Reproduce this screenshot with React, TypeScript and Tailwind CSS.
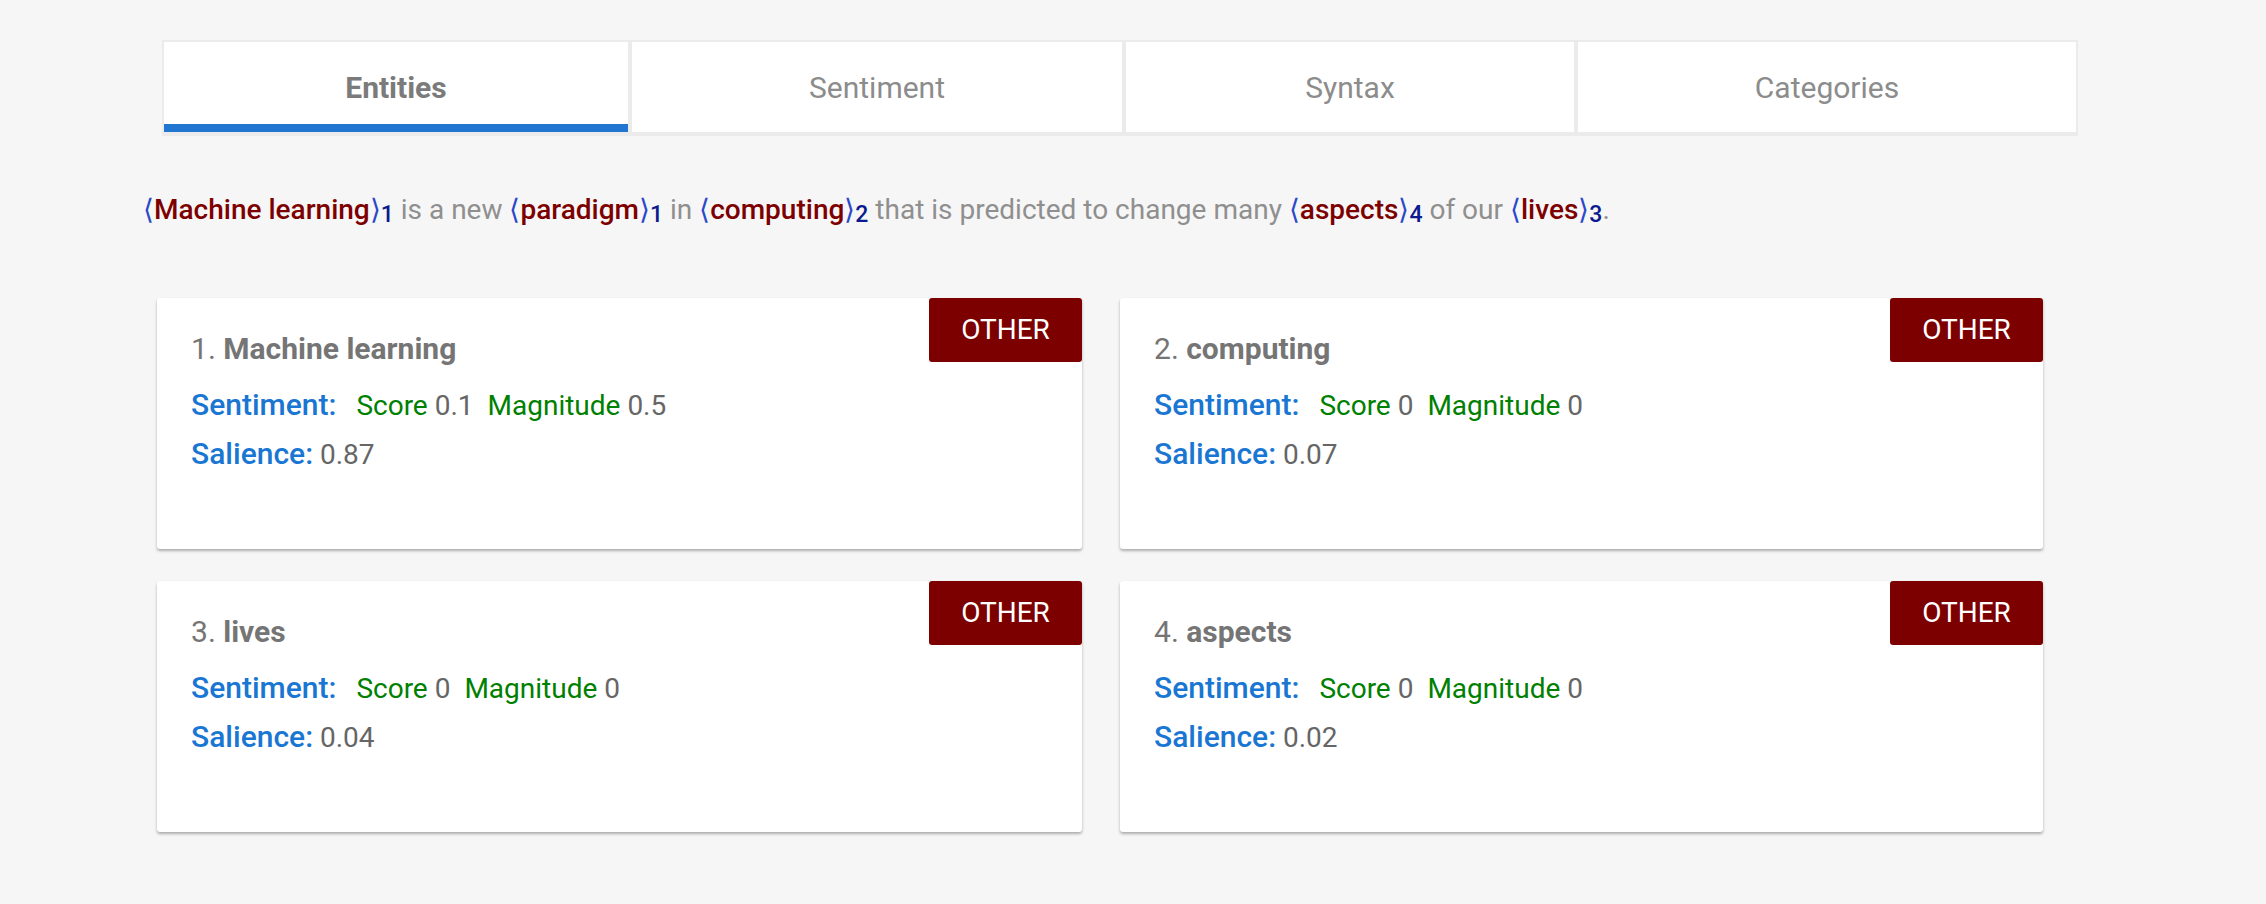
import React from "react";

interface Entity {
  idx: number;
  name: string;
  score: string;
  magnitude: string;
  salience: string;
}

const tabs = [
  { label: "Entities", w: "w-[468px]", active: true },
  { label: "Sentiment", w: "w-[494px]", active: false },
  { label: "Syntax", w: "w-[452px]", active: false },
  { label: "Categories", w: "w-[502px]", active: false },
];

const entities: Entity[] = [
  { idx: 1, name: "Machine learning", score: "0.1", magnitude: "0.5", salience: "0.87" },
  { idx: 2, name: "computing", score: "0", magnitude: "0", salience: "0.07" },
  { idx: 3, name: "lives", score: "0", magnitude: "0", salience: "0.04" },
  { idx: 4, name: "aspects", score: "0", magnitude: "0", salience: "0.02" },
];

const Mark: React.FC<{ text: string; n: number }> = ({ text, n }) => (
  <span className="whitespace-nowrap">
    <span className="text-[#2a48c8] font-thin">⟨</span>
    <span className="text-[#7d0000] font-medium">{text}</span>
    <span className="text-[#2a48c8] font-thin">⟩</span>
    <sub className="text-[23px] font-medium text-[#0b1a8e] relative top-[3px]">{n}</sub>
  </span>
);

const App: React.FC = () => {
  return (
    <div className="min-h-screen bg-[#f6f6f6] font-['Roboto',sans-serif] pt-[40px]">
      <div className="flex ml-[162px] w-[1916px]">
        {tabs.map((t) => (
          <div
            key={t.label}
            className={`${t.w} h-[96px] border-2 border-b-4 border-[#ebebeb] bg-white flex flex-col`}
          >
            <div
              className={`flex-1 flex items-center justify-center pt-[8px] text-[30px] ${
                t.active ? "font-bold text-[#7b7b7b]" : "text-[#8c8c8c]"
              }`}
            >
              {t.label}
            </div>
            <div className={`h-[8px] ${t.active ? "bg-[#2176d2]" : ""}`} />
          </div>
        ))}
      </div>

      <p className="ml-[143px] mt-[54px] text-[28px] leading-[40px] text-[#8f8f8f]">
        <Mark text="Machine learning" n={1} /> is a new <Mark text="paradigm" n={1} /> in{" "}
        <Mark text="computing" n={2} /> that is predicted to change many{" "}
        <Mark text="aspects" n={4} /> of our <Mark text="lives" n={3} />.
      </p>

      <div className="grid grid-cols-[925px_923px] gap-x-[38px] gap-y-[32px] ml-[157px] mt-[68px]">
        {entities.map((e) => (
          <div
            key={e.idx}
            className="relative bg-white h-[251px] rounded-[3px] shadow-[0_2px_3px_rgba(0,0,0,0.3)] pl-[34px] pt-[31px]"
          >
            <div className="absolute top-0 right-0 w-[153px] h-[64px] bg-[#7d0000] rounded-[3px] flex items-center justify-center text-white text-[28px]">
              OTHER
            </div>
            <div className="text-[30px] leading-[40px] text-[#757575]">
              {e.idx}. <span className="font-bold">{e.name}</span>
            </div>
            <div className="mt-[16px] text-[28px] leading-[40px] text-[#666]">
              <span className="text-[#1976d2] font-medium text-[30px]">Sentiment:</span>
              <span className="text-[#008000] ml-[20px]">Score</span> {e.score}
              <span className="text-[#008000] ml-[14px]">Magnitude</span> {e.magnitude}
            </div>
            <div className="mt-[8px] text-[28px] leading-[40px] text-[#666]">
              <span className="text-[#1976d2] font-medium text-[30px]">Salience:</span> {e.salience}
            </div>
          </div>
        ))}
      </div>
    </div>
  );
};

export default App;
